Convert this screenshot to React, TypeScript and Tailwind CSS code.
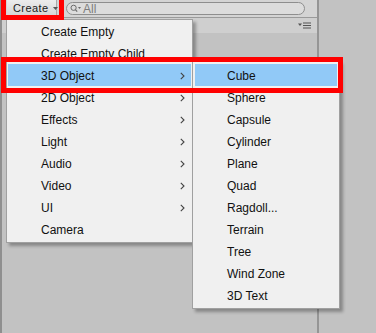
import React from 'react';

type Item = { label: string; sub?: boolean; active?: boolean };

const mainItems: Item[] = [
  { label: 'Create Empty' },
  { label: 'Create Empty Child' },
  { label: '3D Object', sub: true, active: true },
  { label: '2D Object', sub: true },
  { label: 'Effects', sub: true },
  { label: 'Light', sub: true },
  { label: 'Audio', sub: true },
  { label: 'Video', sub: true },
  { label: 'UI', sub: true },
  { label: 'Camera' },
];

const objectItems: Item[] = [
  { label: 'Cube', active: true },
  { label: 'Sphere' },
  { label: 'Capsule' },
  { label: 'Cylinder' },
  { label: 'Plane' },
  { label: 'Quad' },
  { label: 'Ragdoll...' },
  { label: 'Terrain' },
  { label: 'Tree' },
  { label: 'Wind Zone' },
  { label: '3D Text' },
];

const Chevron = () => (
  <svg width="5" height="8" viewBox="0 0 5 8" className="shrink-0">
    <path d="M0.8 0.8 L4 4 L0.8 7.2" fill="none" stroke="#444" strokeWidth="1.1" />
  </svg>
);

const MenuRow = ({ item, pad }: { item: Item; pad: string }) => (
  <div
    className={`flex h-[22px] items-center justify-between pr-[6px] pt-[1px] ${pad} ${
      item.active ? 'bg-[#91c9f7]' : ''
    }`}
  >
    <span className="text-[12px] leading-none text-[#111]">{item.label}</span>
    {item.sub && <Chevron />}
  </div>
);

export default function App() {
  return (
    <div className="relative h-[333px] w-[376px] overflow-hidden bg-[#c2c2c2] font-['Liberation_Sans','Arial',sans-serif]">
      <div className="flex h-full">
        {/* hierarchy panel */}
        <div className="flex w-[317px] flex-col border-l-2 border-[#8f8f8f]">
          <div className="flex h-[18px] items-start border-b border-[#9a9a9a] bg-[#d4d4d4]">
            <div className="ml-[5px] flex h-[16px] w-[50px] items-center border-r border-b border-[#a8a8a8] bg-gradient-to-b from-[#ececec] to-[#d6d6d6] pl-[6px] pt-[2px]">
              <span className="text-[11px] leading-none tracking-[0.4px] text-[#1a1a1a]">Create</span>
              <svg width="5" height="3" viewBox="0 0 5 3" className="ml-[5px] shrink-0">
                <path d="M0 0 H5 L2.5 3 Z" fill="#555" />
              </svg>
            </div>
            <div className="ml-[9px] mt-[2px] flex h-[13px] w-[239px] items-center rounded-full border border-[#8e8e8e] bg-[#dcdcdc] pl-[3px]">
              <svg width="12" height="9" viewBox="0 0 12 9">
                <circle cx="3.6" cy="3.8" r="2.6" fill="none" stroke="#6a6a6a" strokeWidth="1" />
                <path d="M5.4 5.6 L7.2 7.6" stroke="#6a6a6a" strokeWidth="1.2" />
                <path d="M8 3 H11 L9.5 5 Z" fill="#6a6a6a" />
              </svg>
              <span className="ml-[1px] text-[12px] leading-none text-[#7c7c7c]">All</span>
            </div>
          </div>
          <div className="flex h-[15px] items-center justify-end bg-[#cfcfcf] pr-[5px]">
            <svg width="14" height="7" viewBox="0 0 14 7">
              <path d="M0 1.5 H4 L2 4 Z" fill="#555" />
              <path d="M5 1 H13 M5 3.5 H13 M5 6 H13" stroke="#555" strokeWidth="1.1" />
            </svg>
          </div>
          <div className="flex-1" />
        </div>
        <div className="w-[2px] bg-[#959595]" />
        <div className="flex-1 bg-[#c2c2c2]" />
      </div>

      {/* context menu */}
      <div className="absolute left-[6px] top-[19px] w-[187px] border border-[#a0a0a0] bg-[#f0f0f0] px-[1px] pb-[2px] shadow-[3px_3px_3px_rgba(0,0,0,0.3)]">
        {mainItems.map((it) => (
          <MenuRow key={it.label} item={it} pad="pl-[33px]" />
        ))}
      </div>

      {/* submenu */}
      <div className="absolute left-[192px] top-[61px] w-[148px] border border-[#a0a0a0] bg-[#f0f0f0] px-[2px] pb-[2px] pt-[2px] shadow-[3px_3px_3px_rgba(0,0,0,0.3)]">
        {objectItems.map((it) => (
          <MenuRow key={it.label} item={it} pad="pl-[32px]" />
        ))}
      </div>

      {/* annotation boxes */}
      <div className="pointer-events-none absolute left-[1px] top-[-5px] h-[25px] w-[63px] border-[5px] border-[#ff0000]" />
      <div className="pointer-events-none absolute left-[1px] top-[57px] h-[36px] w-[342px] border-[5px] border-[#ff0000]" />
    </div>
  );
}
